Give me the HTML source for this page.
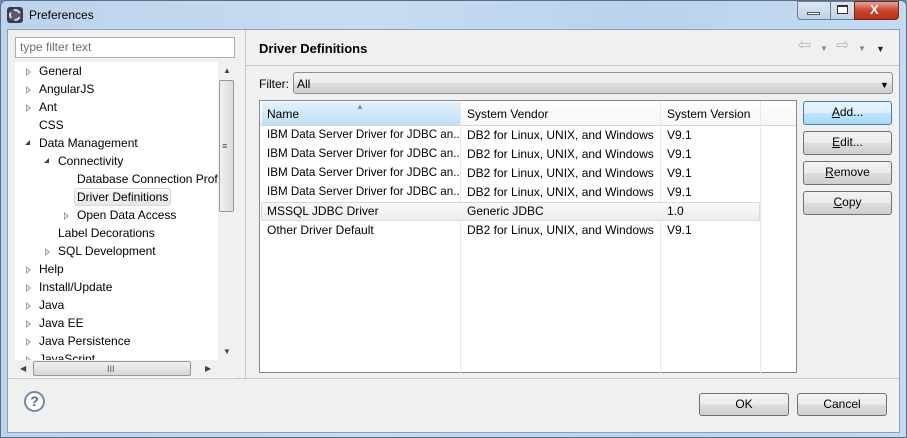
<!DOCTYPE html>
<html><head><style>
*{margin:0;padding:0;box-sizing:border-box}
body{width:907px;height:438px;overflow:hidden;background:#6f8fb0;font-family:"Liberation Sans",sans-serif;font-size:12px;color:#000;position:relative}
.a{position:absolute}
.t{position:absolute;white-space:nowrap;line-height:14px}
.n{width:192px;overflow:hidden;font-size:11.6px}
.btn{position:absolute;border:1px solid #707070;border-radius:3px;background:linear-gradient(#f2f2f2,#ebebeb 50%,#dddddd 51%,#cfcfcf);text-align:center;line-height:21px;font-size:12px}
.tri{position:absolute;width:0;height:0;border-top:4px solid transparent;border-bottom:4px solid transparent;border-left:5px solid #a0a0a0}
.tri:after{content:"";position:absolute;left:-4px;top:-2px;border-top:2px solid transparent;border-bottom:2px solid transparent;border-left:2.5px solid #fff}
.open{position:absolute;width:0;height:0;border-left:5px solid transparent;border-bottom:5px solid #404040}
</style></head><body>
<div class="a" style="left:0;top:0;width:907px;height:438px;border-radius:6px 6px 0 0;background:linear-gradient(90deg,#bcd3ec,#c8dcf1 40%,#b9d3ee 70%,#c6dbf0);border:1px solid #5a6f86"></div>
<div class="a" style="left:7px;top:7px;width:16px;height:16px;border-radius:3px;background:#3b3a55"></div>
<div class="a" style="left:9px;top:9px;width:12px;height:12px;border-radius:50%;border:2px dashed #ddd;background:#5a5870"></div>
<div class="t" style="left:29px;top:8px;font-size:12px">Preferences</div>
<div class="a" style="left:797px;top:1px;width:34px;height:19px;border:1px solid #6b7d93;border-radius:0 0 0 4px;background:linear-gradient(#dbe6f3,#c0d2e8)"></div>
<div class="a" style="left:807px;top:12px;width:13px;height:3px;background:#fff;border:1px solid #555"></div>
<div class="a" style="left:830px;top:1px;width:25px;height:19px;border:1px solid #6b7d93;background:linear-gradient(#dbe6f3,#c0d2e8)"></div>
<div class="a" style="left:837px;top:5px;width:11px;height:9px;border:1px solid #333;border-top-width:2px;background:#fff"></div>
<div class="a" style="left:854px;top:1px;width:45px;height:19px;border:1px solid #6a2a20;border-radius:0 0 4px 0;background:linear-gradient(#e8a494,#c9462c 50%,#b93218)"></div>
<div class="t" style="left:870px;top:3px;color:#fff;font-weight:bold;font-size:13px">X</div>
<div class="a" style="left:7px;top:29px;width:893px;height:404px;background:#f0f0f0;border:1px solid #8aa0b8"></div>
<div class="a" style="left:15px;top:37px;width:220px;height:21px;background:#fff;border:1px solid #abadb3"></div>
<div class="t" style="left:20px;top:40px;color:#6d6d6d">type filter text</div>
<div class="a" style="left:15px;top:62px;width:220px;height:316px;background:#fff"></div>
<div class="a" style="left:218px;top:62px;width:17px;height:298px;background:#f0f0f0"></div>
<div class="a" style="left:219px;top:80px;width:15px;height:132px;border:1px solid #989898;border-radius:2px;background:linear-gradient(90deg,#f0f0f0,#dcdcdc)"></div>
<div class="t" style="left:222px;top:139px;font-size:9px;color:#555">≡</div>
<div class="t" style="left:223px;top:64px;font-size:8px;color:#444">▲</div>
<div class="t" style="left:223px;top:345px;font-size:8px;color:#444">▼</div>
<div class="a" style="left:15px;top:360px;width:220px;height:17px;background:#f0f0f0"></div>
<div class="a" style="left:33px;top:361px;width:158px;height:15px;border:1px solid #989898;border-radius:2px;background:linear-gradient(#f0f0f0,#d8d8d8)"></div>
<div class="t" style="left:107px;top:362px;font-size:9px;color:#555">III</div>
<div class="t" style="left:20px;top:362px;font-size:8px;color:#444">◀</div>
<div class="t" style="left:205px;top:362px;font-size:8px;color:#444">▶</div>
<div class="a" style="left:15px;top:62px;width:203px;height:298px;overflow:hidden">
<div class="tri" style="left:11px;top:6px"></div><div class="t" style="left:24px;top:2px">General</div>
<div class="tri" style="left:11px;top:24px"></div><div class="t" style="left:24px;top:20px">AngularJS</div>
<div class="tri" style="left:11px;top:42px"></div><div class="t" style="left:24px;top:38px">Ant</div>
<div class="t" style="left:24px;top:56px">CSS</div>
<div class="open" style="left:10px;top:78px"></div><div class="t" style="left:24px;top:74px">Data Management</div>
<div class="open" style="left:29px;top:96px"></div><div class="t" style="left:43px;top:92px">Connectivity</div>
<div class="t" style="left:62px;top:110px">Database Connection Profiles</div>
<div class="a" style="left:59px;top:126px;width:97px;height:18px;border:1px solid #d9d9d9;border-radius:3px;background:linear-gradient(#f8f8f8,#e8e8e8)"></div>
<div class="t" style="left:62px;top:128px">Driver Definitions</div>
<div class="tri" style="left:49px;top:150px"></div><div class="t" style="left:62px;top:146px">Open Data Access</div>
<div class="t" style="left:43px;top:164px">Label Decorations</div>
<div class="tri" style="left:30px;top:186px"></div><div class="t" style="left:43px;top:182px">SQL Development</div>
<div class="tri" style="left:11px;top:204px"></div><div class="t" style="left:24px;top:200px">Help</div>
<div class="tri" style="left:11px;top:222px"></div><div class="t" style="left:24px;top:218px">Install/Update</div>
<div class="tri" style="left:11px;top:240px"></div><div class="t" style="left:24px;top:236px">Java</div>
<div class="tri" style="left:11px;top:258px"></div><div class="t" style="left:24px;top:254px">Java EE</div>
<div class="tri" style="left:11px;top:276px"></div><div class="t" style="left:24px;top:272px">Java Persistence</div>
<div class="tri" style="left:11px;top:294px"></div><div class="t" style="left:24px;top:290px">JavaScript</div>
</div>
<div class="a" style="left:245px;top:30px;width:1px;height:348px;background:#c8c8c8"></div>
<div class="t" style="left:259px;top:42px;font-weight:bold;font-size:13px">Driver Definitions</div>
<div class="a" style="left:246px;top:65px;width:653px;height:1px;background:#c8c8c8"></div>
<div class="t" style="left:798px;top:39px;color:#b8b8b8;font-size:16px">⇦</div>
<div class="t" style="left:820px;top:42px;font-size:8px;color:#888">▼</div>
<div class="t" style="left:836px;top:39px;color:#b8b8b8;font-size:16px">⇨</div>
<div class="t" style="left:858px;top:42px;font-size:8px;color:#888">▼</div>
<div class="t" style="left:876px;top:42px;font-size:9px;color:#302040">▼</div>
<div class="t" style="left:259px;top:77px">Filter:</div>
<div class="a" style="left:293px;top:72px;width:600px;height:22px;border:1px solid #8e8f8f;border-radius:3px;background:linear-gradient(#f2f2f2,#ebebeb 50%,#dddddd 51%,#cfcfcf)"></div>
<div class="t" style="left:297px;top:77px">All</div>
<div class="t" style="left:880px;top:78px;font-size:9px">▼</div>
<div class="a" style="left:259px;top:100px;width:538px;height:273px;background:#fff;border:1px solid #828790"></div>
<div class="a" style="left:260px;top:101px;width:536px;height:25px;background:linear-gradient(#fff,#f4f6f8);border-bottom:1px solid #d5d5d5"></div>
<div class="a" style="left:262px;top:102px;width:198px;height:23px;background:linear-gradient(#e3f1fb,#bfe1f6)"></div>
<div class="a" style="left:460px;top:101px;width:1px;height:272px;background:#e2eaf3"></div>
<div class="a" style="left:660px;top:101px;width:1px;height:272px;background:#e2eaf3"></div>
<div class="a" style="left:760px;top:101px;width:1px;height:272px;background:#e2eaf3"></div>
<div class="t" style="left:356px;top:100px;font-size:8px;color:#7090b0">▲</div>
<div class="t" style="left:267px;top:107px">Name</div>
<div class="t" style="left:467px;top:107px">System Vendor</div>
<div class="t" style="left:667px;top:107px">System Version</div>
<div class="a" style="left:261px;top:202px;width:499px;height:19px;border:1px solid #d9d9d9;border-radius:2px;background:linear-gradient(#fafafa,#ececec)"></div>
<div class="t n" style="left:267px;top:128px">IBM Data Server Driver for JDBC an...</div><div class="t" style="left:467px;top:128px">DB2 for Linux, UNIX, and Windows</div><div class="t" style="left:667px;top:128px">V9.1</div>
<div class="t n" style="left:267px;top:147px">IBM Data Server Driver for JDBC an...</div><div class="t" style="left:467px;top:147px">DB2 for Linux, UNIX, and Windows</div><div class="t" style="left:667px;top:147px">V9.1</div>
<div class="t n" style="left:267px;top:166px">IBM Data Server Driver for JDBC an...</div><div class="t" style="left:467px;top:166px">DB2 for Linux, UNIX, and Windows</div><div class="t" style="left:667px;top:166px">V9.1</div>
<div class="t n" style="left:267px;top:185px">IBM Data Server Driver for JDBC an...</div><div class="t" style="left:467px;top:185px">DB2 for Linux, UNIX, and Windows</div><div class="t" style="left:667px;top:185px">V9.1</div>
<div class="t" style="left:267px;top:204px">MSSQL JDBC Driver</div><div class="t" style="left:467px;top:204px">Generic JDBC</div><div class="t" style="left:667px;top:204px">1.0</div>
<div class="t" style="left:267px;top:223px">Other Driver Default</div><div class="t" style="left:467px;top:223px">DB2 for Linux, UNIX, and Windows</div><div class="t" style="left:667px;top:223px">V9.1</div>
<div class="btn" style="left:803px;top:101px;width:89px;height:24px;border-color:#3c7fb1;background:linear-gradient(#eaf6fd,#d9f0fc 50%,#bee6fd 51%,#a7d9f5)"><u>A</u>dd...</div>
<div class="btn" style="left:803px;top:131px;width:89px;height:24px"><u>E</u>dit...</div>
<div class="btn" style="left:803px;top:161px;width:89px;height:24px"><u>R</u>emove</div>
<div class="btn" style="left:803px;top:191px;width:89px;height:24px"><u>C</u>opy</div>
<div class="a" style="left:8px;top:378px;width:891px;height:1px;background:#c8c8c8"></div>
<div class="a" style="left:24px;top:391px;width:21px;height:21px;border-radius:50%;border:2px solid #7088a8;background:#fff;color:#50688a;font-weight:bold;font-size:14px;text-align:center;line-height:17px">?</div>
<div class="btn" style="left:699px;top:393px;width:90px;height:23px">OK</div>
<div class="btn" style="left:797px;top:393px;width:90px;height:23px">Cancel</div>
</body></html>
